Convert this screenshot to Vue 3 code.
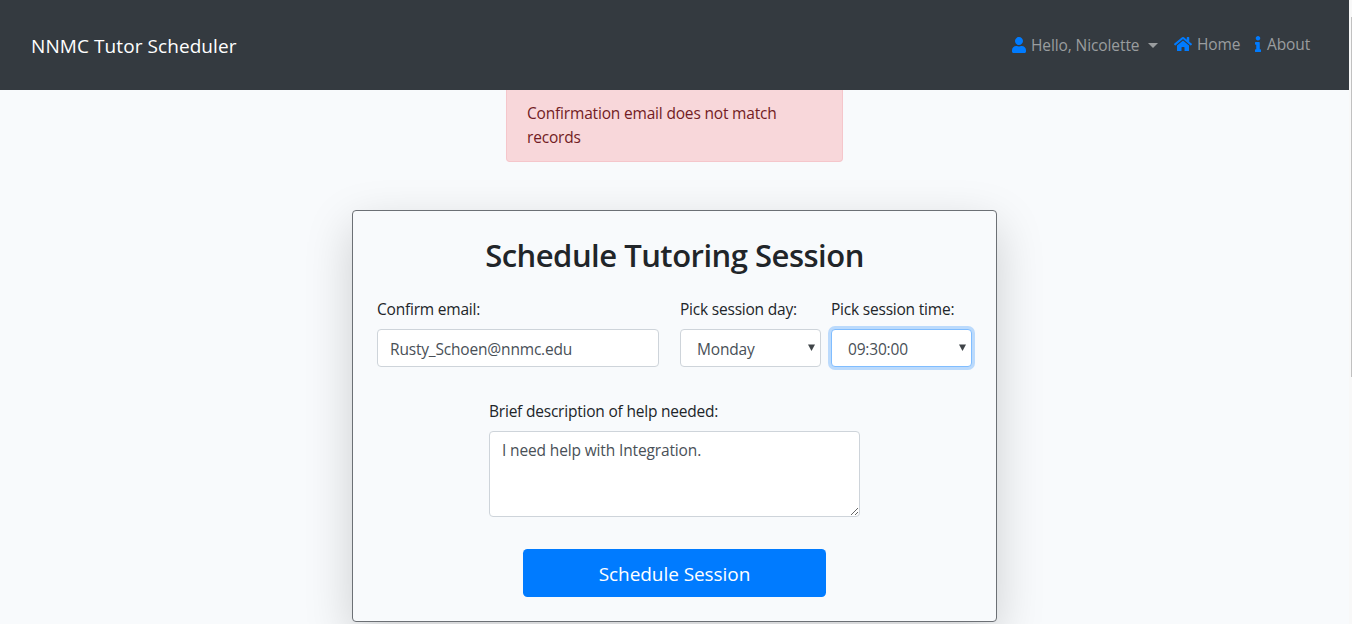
<script setup>
import { ref } from 'vue'

const email = ref('Rusty_Schoen@nnmc.edu')
const day = ref('Monday')
const time = ref('09:30:00')
const description = ref('I need help with Integration.')
</script>

<template>
  <div class="window">
    <div class="page">
      <nav class="navbar">
        <a class="brand">NNMC Tutor Scheduler</a>
        <div class="links">
          <a class="link user">
            <svg class="icon-user" viewBox="0 0 448 512"><path d="M224 256c70.7 0 128-57.3 128-128S294.700 0 224 0 96 57.300 96 128s57.300 128 128 128zm89.600 32h-16.700c-22.200 10.200-46.900 16-72.900 16s-50.600-5.800-72.900-16h-16.700C60.200 288 0 348.200 0 422.400V464c0 26.500 21.500 48 48 48h352c26.500 0 48-21.500 48-48v-41.600c0-74.200-60.200-134.400-134.400-134.400z" /></svg>
            <span class="hello">Hello, Nicolette</span>
            <i class="caret"></i>
          </a>
          <a class="link home">
            <svg class="icon-home" viewBox="0 0 576 512"><path d="M280.370 148.260L96 300.110V464a16 16 0 0 0 16 16l112.060-.29a16 16 0 0 0 15.920-16V368a16 16 0 0 1 16-16h64a16 16 0 0 1 16 16v95.640a16 16 0 0 0 16 16.050L464 480a16 16 0 0 0 16-16V300L295.670 148.260a12.190 12.190 0 0 0-15.300 0zM571.600 251.470L488 182.560V44.050a12 12 0 0 0-12-12h-56a12 12 0 0 0-12 12v72.610L318.470 43a48 48 0 0 0-61 0L4.340 251.470a12 12 0 0 0-1.600 16.900l25.500 31A12 12 0 0 0 45.150 301l235.220-193.740a12.190 12.190 0 0 1 15.300 0L530.900 301a12 12 0 0 0 16.900-1.600l25.500-31a12 12 0 0 0-1.700-16.930z" /></svg>
            <span class="home-text">Home</span>
          </a>
          <a class="link about">
            <svg class="icon-info" viewBox="0 0 192 512"><path d="M20 424.229h20V279.771H20c-11.046 0-20-8.954-20-20V212c0-11.046 8.954-20 20-20h112c11.046 0 20 8.954 20 20v212.229h20c11.046 0 20 8.954 20 20V492c0 11.046-8.954 20-20 20H20c-11.046 0-20-8.954-20-20v-47.771c0-11.046 8.954-20 20-20zM96 0C56.235 0 24 32.235 24 72s32.235 72 72 72 72-32.235 72-72S135.764 0 96 0z" /></svg>
            <span class="about-text">About</span>
          </a>
        </div>
      </nav>

      <main class="content">
        <div class="alert">Confirmation email does not match<br />records</div>

        <form class="card" @submit.prevent>
          <h2 class="title">Schedule Tutoring Session</h2>
          <div class="row">
            <div class="field email-field">
              <label for="email">Confirm email:</label>
              <input id="email" v-model="email" class="control" type="text" />
            </div>
            <div class="field">
              <label for="day">Pick session day:</label>
              <div class="select-wrap">
                <select id="day" v-model="day" class="control select">
                  <option>Monday</option>
                </select>
                <svg class="arrow" viewBox="0 0 7 7"><path d="M0 0.500h7L3.500 7z" /></svg>
              </div>
            </div>
            <div class="field">
              <label for="time">Pick session time:</label>
              <div class="select-wrap">
                <select id="time" v-model="time" class="control select active">
                  <option>09:30:00</option>
                </select>
                <svg class="arrow" viewBox="0 0 7 7"><path d="M0 0.500h7L3.500 7z" /></svg>
              </div>
            </div>
          </div>
          <div class="field help">
            <label for="help">Brief description of help needed:</label>
            <textarea id="help" v-model="description" class="control area"></textarea>
          </div>
          <button class="submit" type="submit">Schedule Session</button>
        </form>
      </main>
    </div>
    <div class="scrollbar"><div class="thumb"></div></div>
  </div>
</template>

<style>
body {
  margin: 0;
  overflow: hidden;
}
</style>

<style scoped>
* {
  box-sizing: border-box;
}

.window {
  display: flex;
  width: 1352px;
  height: 624px;
  overflow: hidden;
  background: #f8f9fa;
  color: #212529;
  font-family: "Open Sans", "Noto Sans", sans-serif;
  font-size: 16px;
  line-height: 24px;
}

.page {
  width: 1349px;
  overflow: hidden;
  background: #f8fafc;
}

.navbar {
  display: flex;
  align-items: center;
  justify-content: space-between;
  height: 90px;
  padding: 0 39px 0 31px;
  background: #343a40;
}

.brand {
  padding-top: 2px;
  color: #fff;
  font-size: 19px;
  letter-spacing: 0.08px;
  line-height: 30px;
  white-space: nowrap;
}

.links {
  display: flex;
  align-items: center;
}

.link {
  display: flex;
  align-items: center;
  color: #9a9d9f;
  font-size: 15.500px;
  letter-spacing: -0.1px;
  white-space: nowrap;
}

.link svg {
  flex: none;
  fill: #007bff;
}

.icon-user {
  width: 14px;
  height: 16px;
  margin-right: 5px;
}

.hello {
  width: 109px;
}

.caret {
  margin-left: 8px;
  border-top: 5px solid #9a9d9f;
  border-right: 5px solid transparent;
  border-left: 5px solid transparent;
}

.home {
  margin: 0 0 2px 16px;
}

.icon-home {
  width: 18px;
  height: 16px;
  margin-right: 5px;
}

.home-text {
  width: 43px;
}

.about {
  margin: 0 0 2px 15px;
}

.icon-info {
  width: 6px;
  height: 16px;
  margin-right: 6px;
}

.about-text {
  width: 43px;
}

.content {
  display: flex;
  flex-direction: column;
  align-items: center;
}

.alert {
  width: 337px;
  height: 72px;
  padding: 11px 20px;
  border: 1px solid #f5c6cb;
  border-top: 0;
  border-radius: 0 0 4px 4px;
  background: #f8d7da;
  color: #721c24;
  font-size: 15.500px;
  letter-spacing: -0.18px;
  white-space: nowrap;
}

.card {
  display: flex;
  flex-direction: column;
  align-items: center;
  width: 645px;
  height: 412px;
  margin-top: 48px;
  padding: 24px 24px 0;
  border: 1px solid #6c7075;
  border-radius: 4px;
  background: #f8fafc;
  box-shadow: 0 16px 48px rgba(0, 0, 0, 0.175);
}

.title {
  margin: 0;
  font-size: 31px;
  font-weight: 600;
  letter-spacing: -0.5px;
  line-height: 40px;
  white-space: nowrap;
}

.row {
  display: grid;
  grid-template-columns: 293px 141px 141px;
  column-gap: 10px;
  align-self: stretch;
  margin-top: 22px;
}

.field {
  display: flex;
  flex-direction: column;
  gap: 8px;
}

.email-field {
  width: 282px;
}

label {
  height: 24px;
  font-size: 15.500px;
  letter-spacing: -0.21px;
  white-space: nowrap;
}

.control {
  display: block;
  width: 100%;
  height: 38px;
  margin: 0;
  padding: 7px 12px 5px;
  border: 1px solid #ced4da;
  border-radius: 4px;
  outline: 0;
  background: #fff;
  color: #495057;
  font-family: inherit;
  font-size: 15.500px;
  letter-spacing: -0.18px;
  line-height: 24px;
}

.select-wrap {
  position: relative;
}

.select {
  padding-left: 16px;
  appearance: none;
}

.active {
  border-color: #80bdff;
  box-shadow: 0 0 0 3px #bbdafc;
}

.arrow {
  position: absolute;
  top: 15px;
  right: 6px;
  width: 7px;
  height: 7px;
  fill: #3f4448;
  pointer-events: none;
}

.help {
  width: 371px;
  margin-top: 32px;
}

.area {
  height: 86px;
  padding-top: 6px;
  letter-spacing: -0.14px;
  resize: vertical;
}

.submit {
  width: 303px;
  height: 48px;
  margin-top: 32px;
  padding: 2px 0 0;
  border: 0;
  border-radius: 4.500px;
  background: #007bff;
  color: #fff;
  font-family: inherit;
  font-size: 19px;
  letter-spacing: -0.06px;
  line-height: 30px;
}

.scrollbar {
  width: 3px;
  padding: 17px 0 0 2px;
  background: #f8f8f8;
}

.thumb {
  height: 360px;
  background: #c1c1c1;
}
</style>
